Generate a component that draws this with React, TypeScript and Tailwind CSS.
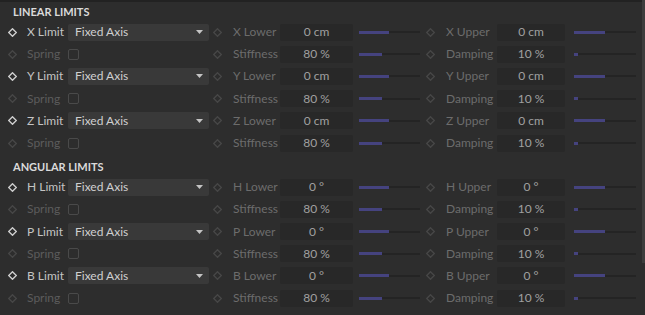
import React from 'react'

type LimitRow = { axis: string; unit: string }

const linear: LimitRow[] = [
  { axis: 'X', unit: '0 cm' },
  { axis: 'Y', unit: '0 cm' },
  { axis: 'Z', unit: '0 cm' },
]

const angular: LimitRow[] = [
  { axis: 'H', unit: '0 °' },
  { axis: 'P', unit: '0 °' },
  { axis: 'B', unit: '0 °' },
]

function Diamond({ active = false }: { active?: boolean }) {
  return (
    <svg width="9" height="9" viewBox="0 0 9 9" className="shrink-0">
      <polygon
        points="4.5,0.7 8.3,4.5 4.5,8.3 0.7,4.5"
        fill="none"
        stroke={active ? '#d0d0d0' : '#474747'}
        strokeWidth="1.3"
      />
    </svg>
  )
}

function Slider({ fill, width }: { fill: number; width: string }) {
  return (
    <div className={`relative flex items-center h-full ${width}`}>
      <div className="h-[2px] w-full bg-[#242424]" />
      <div className="absolute left-0 h-[3px] bg-[#45437f]" style={{ width: fill }} />
    </div>
  )
}

function Field({ value, width }: { value: string; width: string }) {
  return (
    <div className={`h-[17px] ${width} bg-[#282828] rounded-[2px] flex items-center justify-center text-[#a0a0a0]`}>
      {value}
    </div>
  )
}

function AxisRows({ row }: { row: LimitRow }) {
  return (
    <>
      <div className="flex items-center h-[22.2px]">
        <div className="w-[8px]" />
        <Diamond active />
        <div className="w-[41px] ml-[10px] text-[#c4c4c4]">{row.axis} Limit</div>
        <div className="w-[141px] h-[17px] bg-[#393939] rounded-[2px] flex items-center justify-between pl-[7px] pr-[6px] text-[#d0d0d0]">
          <span>Fixed Axis</span>
          <svg width="7" height="4" viewBox="0 0 7 4">
            <polygon points="0,0 7,0 3.5,4" fill="#c4c4c4" />
          </svg>
        </div>
        <div className="w-[4px]" />
        <Diamond />
        <div className="w-[47px] ml-[11px] text-[#6c6c6c]">{row.axis} Lower</div>
        <Field value={row.unit} width="w-[73px]" />
        <div className="w-[6px]" />
        <Slider fill={30} width="w-[61px]" />
        <div className="w-[6px]" />
        <Diamond />
        <div className="w-[51px] ml-[11px] text-[#6c6c6c]">{row.axis} Upper</div>
        <Field value={row.unit} width="w-[68px]" />
        <div className="w-[9px]" />
        <Slider fill={31} width="w-[62px]" />
      </div>
      <div className="flex items-center h-[22.2px]">
        <div className="w-[8px]" />
        <Diamond />
        <div className="w-[41px] ml-[10px] text-[#5c5c5c]">Spring</div>
        <div className="w-[141px] flex items-center">
          <div className="w-[11px] h-[11px] rounded-[2px] border border-[#4a4a4a]" />
        </div>
        <div className="w-[4px]" />
        <Diamond />
        <div className="w-[47px] ml-[11px] text-[#6c6c6c]">Stiffness</div>
        <Field value="80 %" width="w-[73px]" />
        <div className="w-[6px]" />
        <Slider fill={23} width="w-[61px]" />
        <div className="w-[6px]" />
        <Diamond />
        <div className="w-[51px] ml-[11px] text-[#6c6c6c]">Damping</div>
        <Field value="10 %" width="w-[68px]" />
        <div className="w-[9px]" />
        <Slider fill={4} width="w-[62px]" />
      </div>
    </>
  )
}

function Section({ title, rows }: { title: string; rows: LimitRow[] }) {
  return (
    <div className="flex flex-col">
      <div className="h-[18px] flex items-center pl-[13px] text-[11px] font-bold text-[#dadada]">{title}</div>
      {rows.map((r) => (
        <AxisRows key={r.axis} row={r} />
      ))}
    </div>
  )
}

export default function App() {
  return (
    <div
      className="w-[645px] h-[315px] bg-[#2d2d2d] flex overflow-hidden text-[12px] whitespace-nowrap"
      style={{ fontFamily: 'Lato, "Noto Sans", sans-serif' }}
    >
      <div className="flex-1 flex flex-col border-t-2 border-[#222222] pt-[1px]">
        <Section title="LINEAR LIMITS" rows={linear} />
        <div className="h-[4px]" />
        <Section title="ANGULAR LIMITS" rows={angular} />
      </div>
      <div className="w-[3px] flex flex-col">
        <div className="h-[263px] bg-[#3d3d3d]" />
      </div>
    </div>
  )
}
